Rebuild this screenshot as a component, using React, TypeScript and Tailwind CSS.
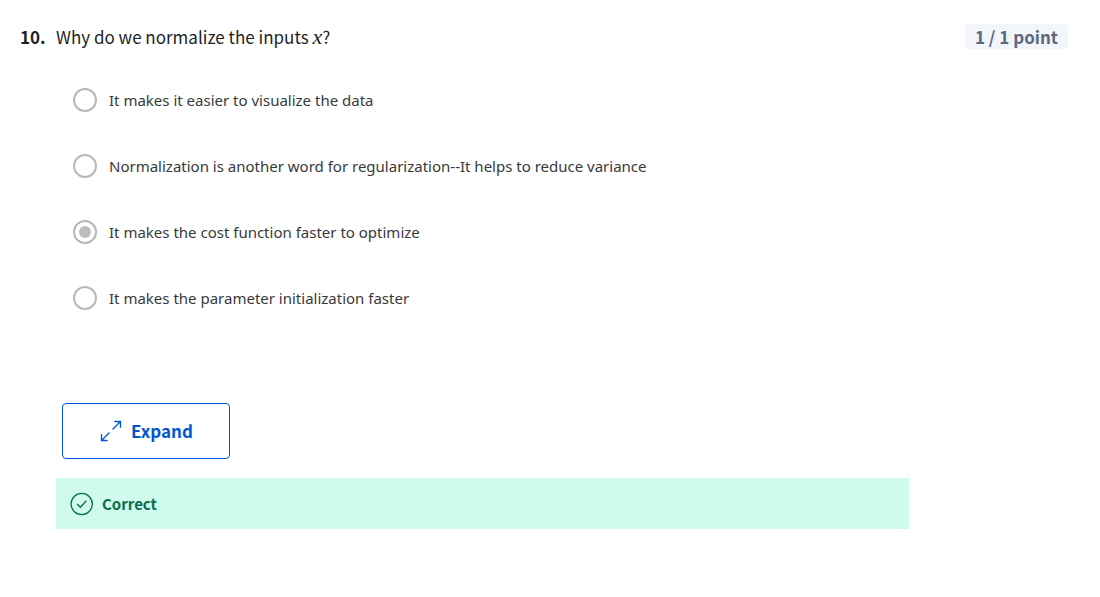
const options = [
  "It makes it easier to visualize the data",
  "Normalization is another word for regularization--It helps to reduce variance",
  "It makes the cost function faster to optimize",
  "It makes the parameter initialization faster",
];

function ExpandIcon() {
  return (
    <svg className="size-6" viewBox="0 0 24 24" fill="none" stroke="currentColor" strokeWidth="1.3" aria-hidden="true">
      <path d="M13.5 10.5 21 3M15.3 2.5H21.5v6.2M10.5 13.5 3 21M2.5 15.3v6.2h6.2" />
    </svg>
  );
}

function CheckIcon() {
  return (
    <svg className="size-6" viewBox="0 0 24 24" fill="none" stroke="currentColor" strokeWidth="1.3" aria-hidden="true">
      <circle cx="11.7" cy="12" r="10.6" />
      <path d="m7.2 12 3.2 3.2 5.9-6.4" />
    </svg>
  );
}

export default function App() {
  return (
    <main className="bg-white pt-6 pr-8 pb-16 pl-5 font-['Noto_Sans_CJK_SC',sans-serif] text-[#1f1f1f]">
      <header className="flex items-baseline">
        <span className="w-9 shrink-0 text-[17px] leading-[25px] font-bold">10.</span>
        <h1 className="grow text-[17px] leading-[25px]">
          Why do we normalize the inputs{" "}
          <i className="font-['Liberation_Serif',serif] text-[22px] leading-none">x</i>?
        </h1>
        <span className="rounded bg-[#f2f5fa] px-2.5 text-[17px] leading-[25px] font-bold text-[#5b6780]">1 / 1 point</span>
      </header>

      <fieldset className="mt-[39px] ml-[53px] flex flex-col gap-[42px] font-['Noto_Sans',sans-serif] text-[15px] leading-6 text-[#373a3c]">
        {options.map((option, i) => (
          <label key={option} className="flex items-center gap-3">
            <input
              type="radio"
              name="answer"
              defaultChecked={i === 2}
              className="m-0 size-6 shrink-0 appearance-none rounded-full border-2 border-[#b8b8b8] bg-white bg-clip-content p-1 checked:bg-[#bdbdbd]"
            />
            {option}
          </label>
        ))}
      </fieldset>

      <button
        type="button"
        className="mt-[93px] ml-[42px] flex h-14 w-[168px] items-center justify-center gap-2 rounded border border-[#0056d2] text-[17px] font-bold text-[#0056d2]"
      >
        <ExpandIcon />
        Expand
      </button>

      <section className="mt-[19px] mr-[159px] ml-9 flex items-center gap-2 bg-[#cffaed] px-3.5 py-[13px] text-[15px] leading-[25px] font-bold text-[#087051]">
        <CheckIcon />
        Correct
      </section>
    </main>
  );
}
